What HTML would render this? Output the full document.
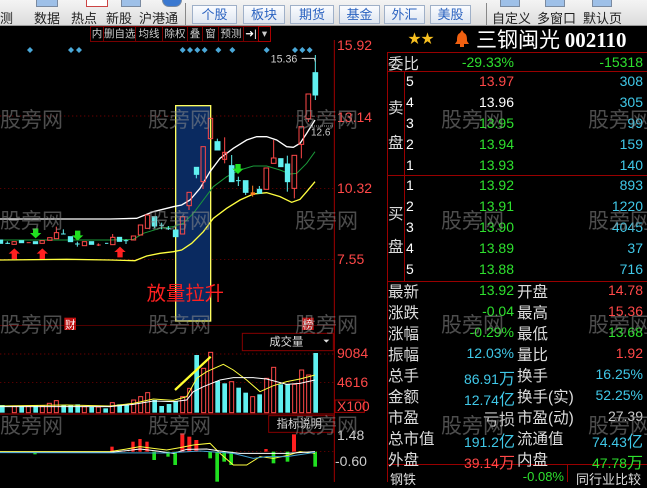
<!DOCTYPE html>
<html><head><meta charset="utf-8"><style>
*{margin:0;padding:0;box-sizing:border-box}
body{width:647px;height:482px;overflow:hidden;background:#000;position:relative;font-family:"Liberation Sans","Noto Sans CJK SC",sans-serif}
.a{position:absolute;white-space:nowrap}
.tb{position:absolute;left:0;top:0;width:647px;height:26px;background:linear-gradient(#f4f4f4,#dcdcdc);border-bottom:1px solid #999}
.tl{font-size:13px;color:#222;top:8px}
.bt{position:absolute;top:5px;height:19px;border:1px solid #9fb0c8;background:linear-gradient(#fafcff,#dfe6f0);color:#2a62c0;font-size:13px;text-align:center;line-height:17px}
.ic{position:absolute;top:0;height:7px;border:1px solid #7a8aa0;border-top:none;background:#9ec0e8}
.hb{position:absolute;top:26px;height:16px;border:1px solid #700;color:#ccc;font-size:10.5px;line-height:14px;text-align:center;white-space:nowrap;overflow:hidden}
.w{position:absolute;font-size:21px;color:rgba(140,140,140,.55);white-space:nowrap}
.r{color:#ff4848}.g{color:#2ee02e}.c{color:#40c8e8}.wh{color:#fff}.gy{color:#ccc}
.n{position:absolute;font-size:14px;text-align:right;white-space:nowrap}
.l{position:absolute;font-size:15.5px;color:#ddd;white-space:nowrap}
</style></head><body>
<div class="tb">
<div class="ic" style="left:36px;width:22px"></div><div class="ic" style="left:86px;width:22px;background:#fff;border-color:#c44"></div>
<div class="ic" style="left:121px;width:20px"></div><div class="ic" style="left:162px;width:20px;background:#3a78d0;border-radius:0 0 8px 8px"></div>
<div class="ic" style="left:500px;width:20px"></div><div class="ic" style="left:545px;width:20px"></div><div class="ic" style="left:592px;width:20px"></div>
<div class="a tl" style="left:0">测</div>
<div class="a tl" style="left:34px">数据</div><div class="a tl" style="left:71px">热点</div><div class="a tl" style="left:106px">新股</div><div class="a tl" style="left:139px">沪港通</div>
<div class="a" style="left:185px;top:3px;width:1px;height:22px;background:#888"></div>
<div class="bt" style="left:192px;width:45px">个股</div><div class="bt" style="left:243px;width:42px">板块</div><div class="bt" style="left:290px;width:44px">期货</div><div class="bt" style="left:339px;width:41px">基金</div><div class="bt" style="left:384px;width:41px">外汇</div><div class="bt" style="left:430px;width:41px">美股</div>
<div class="a" style="left:486px;top:3px;width:1px;height:22px;background:#888"></div>
<div class="a tl" style="left:492px">自定义</div><div class="a tl" style="left:537px">多窗口</div><div class="a tl" style="left:583px">默认页</div>
</div>
<div class="hb" style="left:90px;width:14px">内</div><div class="hb" style="left:103px;width:33px">删自选</div><div class="hb" style="left:135px;width:28px">均线</div><div class="hb" style="left:162px;width:26px">除权</div><div class="hb" style="left:187px;width:16px">叠</div><div class="hb" style="left:202px;width:17px">窗</div><div class="hb" style="left:218px;width:26px">预测</div><div class="hb" style="left:243px;width:16px;color:#fff">➜|</div><div class="hb" style="left:258px;width:13px;border-color:#a00">▾</div>

<svg class="a" style="left:0;top:40px" width="380" height="290" viewBox="0 0 1140 870">
<g stroke="#8a0000" stroke-width="2" stroke-dasharray="4 8"><line x1="0" y1="228" x2="1003" y2="228"/><line x1="0" y1="445" x2="1003" y2="445"/><line x1="0" y1="658" x2="1003" y2="658"/></g>
<line x1="1003" y1="0" x2="1003" y2="870" stroke="#a00000" stroke-width="3"/>
<g fill="#4aa8d8"><g id="d"><path d="M90 21l9 9-9 9-9-9z"/></g>
<use href="#d" x="123"/><use href="#d" x="147"/><use href="#d" x="458"/><use href="#d" x="480"/><use href="#d" x="502"/><use href="#d" x="524"/><use href="#d" x="565"/><use href="#d" x="607"/><use href="#d" x="710"/><use href="#d" x="795"/><use href="#d" x="817"/><use href="#d" x="839"/></g>
<rect x="527" y="197" width="105" height="646" fill="#0a2a60" stroke="#ffff60" stroke-width="4"/>
<polyline fill="none" stroke="#fff" stroke-width="4" points="0,537 330,537 410,535 460,515 520,500 545,495 570,480 600,445 630,395 660,355 700,325 740,300 770,290 800,290 830,300 860,320 880,322 900,310 920,280 945,240"/>
<polyline fill="none" stroke="#1a9a3a" stroke-width="3" points="0,600 330,600 400,598 430,580 480,565 520,560 550,550 580,520 610,480 640,440 680,410 720,390 760,378 800,378 840,390 870,402 890,400 920,370 945,335"/>
<polyline fill="none" stroke="#ffff40" stroke-width="4" points="0,660 200,658 330,660 405,662 440,648 480,640 520,635 545,630 575,610 610,575 640,535 680,505 720,480 760,462 800,458 840,470 875,487 900,478 920,455 945,425"/>
<g stroke="#ff4848" stroke-width="3" fill="none">
<rect x="541" y="530" width="13" height="52"/><rect x="561" y="457" width="13" height="40"/><line x1="567" y1="497" x2="567" y2="510"/>
<rect x="603" y="320" width="13" height="105"/><line x1="609" y1="425" x2="609" y2="447"/><rect x="625" y="235" width="13" height="61"/>
<rect x="668" y="337" width="12" height="21"/><line x1="674" y1="292" x2="674" y2="370"/>
<rect x="792" y="384" width="14" height="64"/><rect x="814" y="354" width="14" height="16"/><line x1="821" y1="300" x2="821" y2="354"/>
<rect x="876" y="346" width="14" height="99"/><line x1="883" y1="445" x2="883" y2="475"/>
<rect x="897" y="260" width="14" height="53"/><line x1="904" y1="313" x2="904" y2="355"/>
<rect x="918" y="162" width="14" height="74"/><line x1="925" y1="236" x2="925" y2="246"/>
<rect x="415" y="555" width="13" height="30"/><rect x="436" y="525" width="13" height="40"/><rect x="394" y="588" width="13" height="12"/>
<rect x="332" y="592" width="13" height="22"/><rect x="247" y="605" width="13" height="12"/><rect x="163" y="578" width="13" height="18"/><rect x="36" y="605" width="13" height="8"/><rect x="120" y="602" width="13" height="8"/><rect x="143" y="593" width="13" height="8"/>
<line x1="169" y1="560" x2="169" y2="578"/><line x1="338" y1="582" x2="338" y2="592"/><line x1="295" y1="610" x2="295" y2="618"/><line x1="290" y1="615" x2="302" y2="615"/><line x1="80" y1="608" x2="92" y2="608"/>
</g>
<rect x="752" y="457" width="13" height="8" fill="#ff8020"/><line x1="758" y1="437" x2="758" y2="470" stroke="#ff8020" stroke-width="3"/>
<g fill="#60f0f0" stroke="#60f0f0" stroke-width="3">
<rect x="520" y="570" width="14" height="20"/><rect x="583" y="382" width="13" height="21"/><line x1="589" y1="403" x2="589" y2="415"/>
<rect x="645" y="305" width="15" height="25"/><line x1="652" y1="296" x2="652" y2="305"/><rect x="688" y="377" width="14" height="48"/><line x1="695" y1="345" x2="695" y2="377"/>
<line x1="715" y1="410" x2="715" y2="438"/><line x1="708" y1="422" x2="722" y2="422"/>
<rect x="730" y="422" width="14" height="35"/><line x1="737" y1="457" x2="737" y2="465"/><rect x="772" y="448" width="13" height="12"/><line x1="778" y1="438" x2="778" y2="448"/>
<rect x="836" y="356" width="13" height="24"/><rect x="856" y="372" width="13" height="53"/><line x1="862" y1="347" x2="862" y2="455"/>
<rect x="939" y="98" width="14" height="67"/><line x1="946" y1="45" x2="946" y2="180"/>
<rect x="457" y="530" width="13" height="28"/><line x1="463" y1="558" x2="463" y2="565"/><line x1="485" y1="548" x2="485" y2="568"/><line x1="478" y1="556" x2="492" y2="556"/><line x1="505" y1="558" x2="505" y2="570"/><line x1="498" y1="566" x2="512" y2="566"/>
<rect x="352" y="592" width="13" height="12"/><line x1="378" y1="598" x2="378" y2="612"/><line x1="371" y1="602" x2="385" y2="602"/>
<rect x="205" y="590" width="13" height="15"/><line x1="232" y1="605" x2="232" y2="620"/><line x1="225" y1="612" x2="239" y2="612"/><rect x="268" y="605" width="13" height="8"/><rect x="58" y="602" width="13" height="6"/><rect x="0" y="600" width="8" height="10"/>
<line x1="22" y1="604" x2="22" y2="612"/><line x1="16" y1="610" x2="30" y2="610"/><line x1="190" y1="568" x2="190" y2="582"/><line x1="183" y1="582" x2="197" y2="582"/><rect x="100" y="605" width="13" height="6"/><line x1="315" y1="610" x2="325" y2="610"/>
</g>
<g fill="#20e020"><path d="M99 565h16v14h9l-17 16-17-16h9z"/><path d="M225 572h16v14h9l-17 16-17-16h9z"/><path d="M706 372h16v14h9l-17 16-17-16h9z"/></g>
<g fill="#ff2020"><path d="M43 625l17 16h-9v16h-16v-16h-9z"/><path d="M127 625l17 16h-9v16h-16v-16h-9z"/><path d="M360 620l17 16h-9v16h-16v-16h-9z"/></g>
<polyline fill="none" stroke="#ccc" stroke-width="3" points="905,55 943,55 946,65"/>
<line x1="930" y1="258" x2="1000" y2="258" stroke="#ccc" stroke-width="2" stroke-dasharray="3 3"/>
<text x="812" y="68" fill="#ccc" font-size="32" font-family="Liberation Sans">15.36</text>
<text x="933" y="287" fill="#ccc" font-size="30" font-family="Liberation Sans">12.6</text>
<text x="440" y="780" fill="#ff2020" font-size="58" font-family="Noto Sans CJK SC">放量拉升</text>
<rect x="193" y="833" width="35" height="37" fill="#c01010"/><text x="195" y="866" fill="#fff" font-size="32" font-family="Noto Sans CJK SC">财</text>
<rect x="906" y="833" width="35" height="37" fill="#c01010"/><text x="908" y="866" fill="#fff" font-size="32" font-family="Noto Sans CJK SC">榜</text>
</svg>
<div class="a r" style="left:337px;top:37px;font-size:14px">15.92</div>
<div class="a r" style="left:337px;top:109px;font-size:14px">13.14</div>
<div class="a r" style="left:337px;top:180px;font-size:14px">10.32</div>
<div class="a r" style="left:337px;top:251px;font-size:14px">7.55</div>

<svg class="a" style="left:0;top:325px" width="380" height="157" viewBox="0 0 1140 471">
<line x1="0" y1="0" x2="1003" y2="0" stroke="#a00000" stroke-width="3"/>
<line x1="0" y1="267" x2="1003" y2="267" stroke="#a00000" stroke-width="3"/>
<g stroke="#8a0000" stroke-width="2" stroke-dasharray="4 8"><line x1="0" y1="87" x2="1003" y2="87"/><line x1="0" y1="172" x2="1003" y2="172"/><line x1="0" y1="380" x2="1003" y2="380"/></g>
<line x1="1003" y1="0" x2="1003" y2="471" stroke="#a00000" stroke-width="3"/>
<g fill="#60f0f0"><rect x="0" y="240" width="14" height="23"/><rect x="58" y="242" width="14" height="21"/><rect x="100" y="240" width="14" height="23"/><rect x="184" y="240" width="14" height="23"/><rect x="205" y="240" width="14" height="23"/><rect x="226" y="238" width="14" height="25"/><rect x="268" y="246" width="14" height="17"/><rect x="310" y="250" width="14" height="13"/><rect x="352" y="238" width="14" height="25"/><rect x="373" y="240" width="14" height="23"/>
<rect x="457" y="225" width="14" height="38"/><rect x="478" y="243" width="14" height="20"/><rect x="500" y="237" width="14" height="26"/><rect x="520" y="228" width="14" height="35"/><rect x="583" y="90" width="14" height="173"/><rect x="646" y="168" width="14" height="95"/><rect x="667" y="175" width="14" height="88"/><rect x="709" y="188" width="14" height="75"/><rect x="730" y="203" width="14" height="60"/><rect x="772" y="208" width="14" height="55"/><rect x="835" y="178" width="14" height="85"/><rect x="856" y="178" width="14" height="85"/><rect x="940" y="84" width="14" height="179"/></g>
<g fill="none" stroke="#ff4848" stroke-width="3"><rect x="37" y="243" width="12" height="20"/><rect x="79" y="243" width="12" height="20"/><rect x="121" y="243" width="12" height="20"/><rect x="142" y="235" width="12" height="28"/><rect x="163" y="227" width="12" height="36"/><rect x="247" y="245" width="12" height="18"/><rect x="289" y="246" width="12" height="17"/><rect x="331" y="233" width="12" height="30"/><rect x="395" y="225" width="12" height="38"/><rect x="416" y="215" width="12" height="48"/><rect x="437" y="203" width="12" height="60"/><rect x="542" y="215" width="12" height="48"/><rect x="563" y="190" width="12" height="73"/><rect x="605" y="130" width="12" height="133"/><rect x="626" y="82" width="12" height="181"/><rect x="689" y="170" width="12" height="93"/><rect x="752" y="215" width="12" height="48"/><rect x="794" y="160" width="12" height="103"/><rect x="815" y="127" width="12" height="136"/><rect x="878" y="178" width="12" height="85"/><rect x="899" y="135" width="12" height="128"/><rect x="920" y="150" width="12" height="113"/></g>
<line x1="525" y1="195" x2="632" y2="95" stroke="#ffff30" stroke-width="7"/>
<polyline fill="none" stroke="#ffff40" stroke-width="3" points="0,243 200,240 330,243 400,235 460,222 520,226 560,215 590,160 620,140 670,118 700,135 740,165 780,200 820,182 860,170 900,162 945,150"/>
<polyline fill="none" stroke="#fff" stroke-width="3" points="0,245 330,245 400,238 460,228 520,230 560,225 580,200 610,185 660,165 700,158 760,158 800,162 860,178 900,175 945,165"/>
<g fill="#ff2020"><rect x="331" y="365" width="10" height="15"/><rect x="394" y="350" width="10" height="30"/><rect x="415" y="342" width="10" height="38"/><rect x="436" y="350" width="10" height="30"/><rect x="541" y="325" width="12" height="55"/><rect x="562" y="335" width="12" height="45"/><rect x="583" y="345" width="12" height="35"/><rect x="876" y="328" width="12" height="52"/><rect x="793" y="372" width="10" height="8"/></g>
<g fill="#20e020"><rect x="457" y="380" width="11" height="25"/><rect x="499" y="380" width="10" height="15"/><rect x="520" y="380" width="11" height="40"/><rect x="625" y="380" width="11" height="20"/><rect x="646" y="380" width="11" height="90"/><rect x="667" y="380" width="11" height="30"/><rect x="688" y="380" width="11" height="40"/><rect x="815" y="380" width="11" height="35"/><rect x="857" y="380" width="11" height="30"/><rect x="940" y="380" width="11" height="45"/><rect x="100" y="380" width="10" height="8"/></g>
<polyline fill="none" stroke="#ffff40" stroke-width="3" points="0,380 330,380 380,372 420,365 460,370 500,375 540,368 580,360 630,355 660,385 700,420 740,420 780,395 820,400 860,392 900,380 945,385"/>
<polyline fill="none" stroke="#fff" stroke-width="3" points="0,382 330,382 380,377 420,372 470,378 520,385 560,373 620,372 660,378 720,385 780,385 860,385 945,380"/>
<polyline fill="none" stroke="#40a0d0" stroke-width="3" points="0,383 500,384 600,378 700,385 760,400 800,395 860,395 945,382"/>
<rect x="727" y="25" width="273" height="52" fill="none" stroke="#800" stroke-width="3"/>
<text x="808" y="62" fill="#ddd" font-size="34" font-family="Noto Sans CJK SC">成交量</text><path d="M970 44h18l-9 9z" fill="#ddd"/>
<rect x="1005" y="225" width="88" height="37" fill="none" stroke="#a00" stroke-width="3"/>
<rect x="806" y="272" width="194" height="50" fill="none" stroke="#800" stroke-width="3"/>
<text x="830" y="308" fill="#ddd" font-size="34" font-family="Noto Sans CJK SC">指标说明</text>
</svg>
<div class="a r" style="left:337px;top:345px;font-size:14px">9084</div>
<div class="a r" style="left:337px;top:374px;font-size:14px">4616</div>
<div class="a r" style="left:337px;top:398px;font-size:14px">X100</div>
<div class="a gy" style="left:337px;top:427px;font-size:14px">1.48</div>
<div class="a gy" style="left:335px;top:453px;font-size:14px">-0.60</div>

<div class="a" style="left:408px;top:28px;color:#f8c020;font-size:13px">★★</div>
<svg class="a" style="left:455px;top:29px" width="14" height="18"><path d="M7 1l2 3c3 1 3 5 3 8l2 3H0l2-3c0-3 0-7 3-8z" fill="#f06010"/><rect x="5" y="15" width="4" height="3" fill="#f06010"/></svg>
<div class="a wh" style="left:476px;top:24px;font-size:21px;font-family:'Noto Sans CJK SC','Liberation Sans',sans-serif">三钢闽光 <span style="font-family:'Liberation Serif';font-weight:bold">002110</span></div>
<div class="a" style="left:387px;top:52px;width:260px;height:1px;background:#900"></div>
<div class="a" style="left:387px;top:52px;width:1px;height:430px;background:#900"></div>
<div class="a" style="left:387px;top:71px;width:260px;height:1px;background:#900"></div>
<div class="a" style="left:404px;top:71px;width:1px;height:211px;background:#900"></div>
<div class="a" style="left:387px;top:175px;width:260px;height:1px;background:#900"></div>
<div class="a" style="left:387px;top:281px;width:260px;height:1px;background:#900"></div>
<div class="a" style="left:387px;top:464px;width:260px;height:1px;background:#900"></div>
<div class="a" style="left:567px;top:464px;width:1px;height:18px;background:#900"></div>
<div class="l" style="left:388px;top:52px">委比</div>
<div class="n g" style="right:133px;top:54px">-29.33%</div><div class="n g" style="right:4px;top:54px">-15318</div>
<div class="l" style="left:388px;top:96px">卖</div><div class="l" style="left:388px;top:131px">盘</div>
<div class="l" style="left:388px;top:202px">买</div><div class="l" style="left:388px;top:235px">盘</div>
<div class="n wh" style="left:406px;top:73px">5</div><div class="n wh" style="left:406px;top:94px">4</div><div class="n wh" style="left:406px;top:115px">3</div><div class="n wh" style="left:406px;top:136px">2</div><div class="n wh" style="left:406px;top:157px">1</div>
<div class="n r" style="right:133px;top:73px">13.97</div><div class="n wh" style="right:133px;top:94px">13.96</div><div class="n g" style="right:133px;top:115px">13.95</div><div class="n g" style="right:133px;top:136px">13.94</div><div class="n g" style="right:133px;top:157px">13.93</div>
<div class="n c" style="right:4px;top:73px">308</div><div class="n c" style="right:4px;top:94px">305</div><div class="n c" style="right:4px;top:115px">99</div><div class="n c" style="right:4px;top:136px">159</div><div class="n c" style="right:4px;top:157px">140</div>
<div class="n wh" style="left:406px;top:177px">1</div><div class="n wh" style="left:406px;top:198px">2</div><div class="n wh" style="left:406px;top:219px">3</div><div class="n wh" style="left:406px;top:240px">4</div><div class="n wh" style="left:406px;top:261px">5</div>
<div class="n g" style="right:133px;top:177px">13.92</div><div class="n g" style="right:133px;top:198px">13.91</div><div class="n g" style="right:133px;top:219px">13.90</div><div class="n g" style="right:133px;top:240px">13.89</div><div class="n g" style="right:133px;top:261px">13.88</div>
<div class="n c" style="right:4px;top:177px">893</div><div class="n c" style="right:4px;top:198px">1220</div><div class="n c" style="right:4px;top:219px">4045</div><div class="n c" style="right:4px;top:240px">37</div><div class="n c" style="right:4px;top:261px">716</div>

<div class="l" style="left:388px;top:280px">最新</div><div class="n g" style="right:133px;top:282px">13.92</div><div class="l" style="left:517px;top:280px">开盘</div><div class="n r" style="right:4px;top:282px">14.78</div>
<div class="l" style="left:388px;top:301px">涨跌</div><div class="n g" style="right:133px;top:303px">-0.04</div><div class="l" style="left:517px;top:301px">最高</div><div class="n r" style="right:4px;top:303px">15.36</div>
<div class="l" style="left:388px;top:322px">涨幅</div><div class="n g" style="right:133px;top:324px">-0.29%</div><div class="l" style="left:517px;top:322px">最低</div><div class="n g" style="right:4px;top:324px">13.68</div>
<div class="l" style="left:388px;top:343px">振幅</div><div class="n c" style="right:133px;top:345px">12.03%</div><div class="l" style="left:517px;top:343px">量比</div><div class="n r" style="right:4px;top:345px">1.92</div>
<div class="l" style="left:388px;top:364px">总手</div><div class="n c" style="right:132px;top:365px">86.91<span style="font-size:16px">万</span></div><div class="l" style="left:517px;top:364px">换手</div><div class="n c" style="right:4px;top:366px">16.25%</div>
<div class="l" style="left:388px;top:385px">金额</div><div class="n c" style="right:132px;top:386px">12.74<span style="font-size:16px">亿</span></div><div class="l" style="left:517px;top:385px">换手(实)</div><div class="n c" style="right:4px;top:387px">52.25%</div>
<div class="l" style="left:388px;top:406px">市盈</div><div class="n" style="right:132px;top:406px;color:#ccc;font-size:16px">亏损</div><div class="l" style="left:517px;top:406px">市盈(动)</div><div class="n" style="right:4px;top:408px;color:#ccc">27.39</div>
<div class="l" style="left:388px;top:427px">总市值</div><div class="n c" style="right:132px;top:428px">191.2<span style="font-size:16px">亿</span></div><div class="l" style="left:517px;top:427px">流通值</div><div class="n c" style="right:4px;top:428px">74.43<span style="font-size:16px">亿</span></div>
<div class="l" style="left:388px;top:448px">外盘</div><div class="n r" style="right:132px;top:449px">39.14<span style="font-size:16px">万</span></div><div class="l" style="left:517px;top:448px">内盘</div><div class="n g" style="right:4px;top:449px">47.78<span style="font-size:16px">万</span></div>
<div class="l" style="left:390px;top:469px;font-size:13px">钢铁</div><div class="n g" style="right:83px;top:469px;font-size:13px">-0.08%</div><div class="l" style="left:576px;top:469px;font-size:13px">同行业比较</div>

<div class="w" style="left:0;top:104px">股旁网</div><div class="w" style="left:148px;top:104px">股旁网</div><div class="w" style="left:295px;top:104px">股旁网</div>
<div class="w" style="left:0;top:205px">股旁网</div><div class="w" style="left:148px;top:205px">股旁网</div><div class="w" style="left:295px;top:205px">股旁网</div>
<div class="w" style="left:0;top:309px">股旁网</div><div class="w" style="left:148px;top:309px">股旁网</div><div class="w" style="left:295px;top:309px">股旁网</div>
<div class="w" style="left:0;top:410px">股旁网</div><div class="w" style="left:148px;top:410px">股旁网</div><div class="w" style="left:295px;top:410px">股旁网</div>
<div class="w" style="left:441px;top:104px">股旁网</div><div class="w" style="left:588px;top:104px">股旁网</div>
<div class="w" style="left:441px;top:205px">股旁网</div><div class="w" style="left:588px;top:205px">股旁网</div>
<div class="w" style="left:441px;top:309px">股旁网</div><div class="w" style="left:588px;top:309px">股旁网</div>
<div class="w" style="left:441px;top:410px">股旁网</div><div class="w" style="left:588px;top:410px">股旁网</div>
</body></html>
